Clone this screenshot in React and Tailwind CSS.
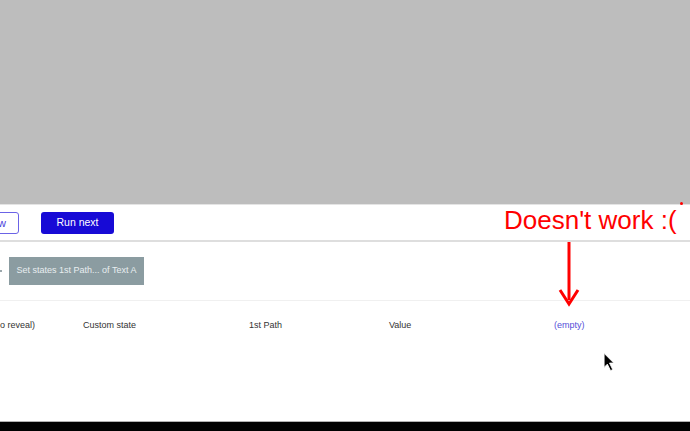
import React from "react";

const App = () => {
  return (
    <div
      className="relative w-[690px] h-[431px] overflow-hidden bg-white flex flex-col"
      style={{ fontFamily: '"Liberation Sans", Arial, sans-serif' }}
    >
      {/* grey preview area */}
      <div className="h-[204px] bg-[#bdbdbd] shrink-0" />
      <div className="h-px bg-[#e4e4e4] shrink-0" />

      {/* toolbar */}
      <div className="h-[35px] flex items-center gap-[22px] shrink-0 pt-[1px]">
        <div className="ml-[-60px] w-[79px] h-[22px] border border-[#6b63e6] rounded-[3px] flex items-center justify-end pr-[12px] text-[11px] text-[#4a40dc]">
          View
        </div>
        <div className="w-[73px] h-[22px] bg-[#170ad6] rounded-[3px] flex items-center justify-center text-[10.5px] text-white">
          Run next
        </div>
      </div>
      <div className="h-[2px] bg-[#dedede] shrink-0" />

      {/* action row */}
      <div className="h-[58px] flex items-center gap-[7px] shrink-0">
        <div className="w-[2px] h-[2px] bg-[#7a8a90] rounded-full" />
        <div className="w-[135px] h-[28px] bg-[#8b9ca1] flex items-center justify-center text-[9px] text-[#e8eef0]">
          Set states 1st Path... of Text A
        </div>
      </div>
      <div className="h-px bg-[#f0f0f0] shrink-0" />

      {/* table row */}
      <div className="h-[50px] flex items-center text-[9px] text-[#333] shrink-0">
        <span className="w-[83px]">o reveal)</span>
        <span className="w-[166px]">Custom state</span>
        <span className="w-[140px]">1st Path</span>
        <span className="w-[165px]">Value</span>
        <span className="text-[#5550d8]">(empty)</span>
      </div>

      <div className="flex-1" />
      <div className="h-px bg-[#b0b0b0] shrink-0" />
      <div className="h-[9px] bg-black shrink-0" />

      {/* annotation overlay */}
      <div className="absolute left-[504px] top-[204px] text-[26px] leading-[32px] text-[#ff0000]">
        Doesn't work :(
      </div>
      <div className="absolute left-[680px] top-[202px] w-[3px] h-[3px] rounded-full bg-[#ff0000]" />
      <svg
        className="absolute left-[558px] top-[240px]"
        width="22"
        height="70"
        viewBox="0 0 22 70"
      >
        <line x1="11" y1="2" x2="11" y2="60" stroke="#f00" strokeWidth="3" />
        <polyline
          points="2,50 11,64 20,50"
          fill="none"
          stroke="#f00"
          strokeWidth="3"
          strokeLinejoin="miter"
        />
      </svg>

      {/* cursor */}
      <svg
        className="absolute left-[603px] top-[352px]"
        width="13"
        height="20"
        viewBox="0 0 12 18"
      >
        <path d="M1 1 L1 14 L4 11 L7 17 L9 16 L6 10 L10 10 Z" fill="#000" stroke="#fff" strokeWidth="0.8" />
      </svg>
    </div>
  );
};

export default App;
